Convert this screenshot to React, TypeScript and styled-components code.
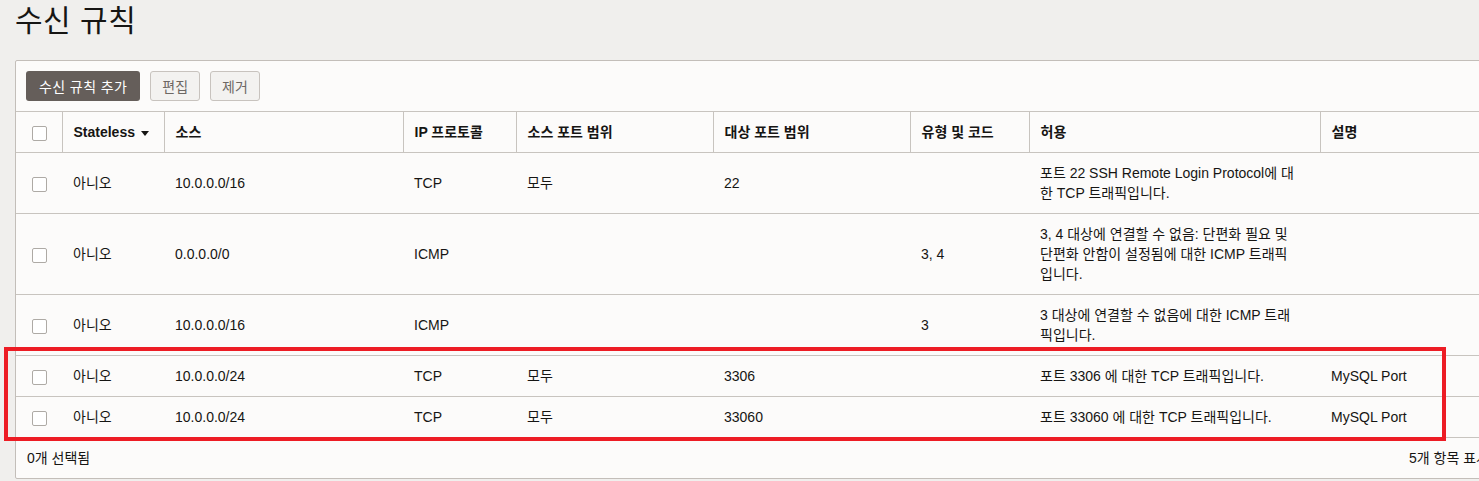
import React from "react";
import styled, { createGlobalStyle } from "styled-components";

type Rule = {
  src: string;
  proto: string;
  srcPort: string;
  dstPort: string;
  typeCode: string;
  allow: string;
  desc: string;
};

const rules: Rule[] = [
  {
    src: "10.0.0.0/16",
    proto: "TCP",
    srcPort: "모두",
    dstPort: "22",
    typeCode: "",
    allow: "포트 22 SSH Remote Login Protocol에 대한 TCP 트래픽입니다.",
    desc: "",
  },
  {
    src: "0.0.0.0/0",
    proto: "ICMP",
    srcPort: "",
    dstPort: "",
    typeCode: "3, 4",
    allow:
      "3, 4 대상에 연결할 수 없음: 단편화 필요 및 단편화 안함이 설정됨에 대한 ICMP 트래픽입니다.",
    desc: "",
  },
  {
    src: "10.0.0.0/16",
    proto: "ICMP",
    srcPort: "",
    dstPort: "",
    typeCode: "3",
    allow: "3 대상에 연결할 수 없음에 대한 ICMP 트래픽입니다.",
    desc: "",
  },
  {
    src: "10.0.0.0/24",
    proto: "TCP",
    srcPort: "모두",
    dstPort: "3306",
    typeCode: "",
    allow: "포트 3306 에 대한 TCP 트래픽입니다.",
    desc: "MySQL Port",
  },
  {
    src: "10.0.0.0/24",
    proto: "TCP",
    srcPort: "모두",
    dstPort: "33060",
    typeCode: "",
    allow: "포트 33060 에 대한 TCP 트래픽입니다.",
    desc: "MySQL Port",
  },
];

const colWidths = [46, 102, 239, 113, 197, 197, 119, 291, 179];

function App() {
  return (
    <Page>
      <GlobalStyle />
      <Title>수신 규칙</Title>
      <Panel>
        <Toolbar>
          <PrimaryButton>수신 규칙 추가</PrimaryButton>
          <GhostButton>편집</GhostButton>
          <GhostButton>제거</GhostButton>
        </Toolbar>
        <Table>
          <colgroup>
            {colWidths.map((w, i) => (
              <col key={i} style={{ width: w }} />
            ))}
          </colgroup>
          <thead>
            <tr>
              <HeadCell $center>
                <Check />
              </HeadCell>
              <HeadCell>
                Stateless <SortArrow />
              </HeadCell>
              <HeadCell>소스</HeadCell>
              <HeadCell>IP 프로토콜</HeadCell>
              <HeadCell>소스 포트 범위</HeadCell>
              <HeadCell>대상 포트 범위</HeadCell>
              <HeadCell>유형 및 코드</HeadCell>
              <HeadCell>허용</HeadCell>
              <HeadCell $last>설명</HeadCell>
            </tr>
          </thead>
          <tbody>
            {rules.map((r, i) => (
              <tr key={i}>
                <Cell $center>
                  <Check />
                </Cell>
                <Cell>아니오</Cell>
                <Cell>{r.src}</Cell>
                <Cell>{r.proto}</Cell>
                <Cell>{r.srcPort}</Cell>
                <Cell>{r.dstPort}</Cell>
                <Cell>{r.typeCode}</Cell>
                <Cell>
                  <AllowText>{r.allow}</AllowText>
                </Cell>
                <Cell>{r.desc}</Cell>
              </tr>
            ))}
          </tbody>
        </Table>
        <Footer>
          <span>0개 선택됨</span>
          <span>5개 항목 표시</span>
        </Footer>
      </Panel>
      <Highlight />
    </Page>
  );
}

export default App;

const GlobalStyle = createGlobalStyle`
  body {
    margin: 0;
    background: #f0efed;
    overflow: hidden;
    font-family: "Liberation Sans", "Noto Sans CJK KR", Arial, sans-serif;
    color: #161513;
  }
`;

const Page = styled.div`
  position: relative;
  width: 1479px;
  height: 481px;
  padding: 0 0 0 15px;
  box-sizing: border-box;
  overflow: hidden;
`;

const Title = styled.h1`
  margin: 0;
  height: 60px;
  font-size: 30px;
  font-weight: 400;
  line-height: 42px;
  letter-spacing: 0.5px;
`;

const Panel = styled.div`
  width: 1485px;
  background: #fcfbfa;
  border: 1px solid #c3beb9;
  border-radius: 2px;
  box-sizing: border-box;
`;

const Toolbar = styled.div`
  display: flex;
  gap: 10px;
  padding: 10px;
`;

const PrimaryButton = styled.button`
  height: 30px;
  padding: 0 13px;
  border: none;
  border-radius: 3px;
  background: #655e5a;
  color: #ffffff;
  font-family: inherit;
  font-size: 14px;
  letter-spacing: 0.4px;
`;

const GhostButton = styled.button`
  height: 30px;
  padding: 0 11px;
  border: 1px solid #c8c3be;
  border-radius: 3px;
  background: #f3f2f0;
  color: #6d6864;
  font-family: inherit;
  font-size: 14px;
`;

const Table = styled.table`
  width: 100%;
  table-layout: fixed;
  border-collapse: collapse;
  font-size: 14px;
  line-height: 20px;
`;

const HeadCell = styled.th<{ $center?: boolean; $last?: boolean }>`
  padding: 10px 10px 10px 11px;
  text-align: ${(p) => (p.$center ? "center" : "left")};
  font-weight: 700;
  border-top: 1px solid #c8c4bf;
  border-bottom: 1px solid #c8c4bf;
  border-right: ${(p) => (p.$last ? "none" : "1px solid #c8c4bf")};
  white-space: nowrap;
  vertical-align: middle;
`;

const Cell = styled.td<{ $center?: boolean }>`
  padding: 10px 10px 10px 11px;
  text-align: ${(p) => (p.$center ? "center" : "left")};
  border-bottom: 1px solid #c8c4bf;
  vertical-align: middle;
`;

const AllowText = styled.div`
  max-width: 259px;
`;

const Check = styled.span`
  display: inline-block;
  width: 15px;
  height: 15px;
  border: 1px solid #aeaaa5;
  border-radius: 2px;
  background: #ffffff;
  box-sizing: border-box;
  vertical-align: middle;
`;

const SortArrow = styled.span`
  display: inline-block;
  margin-left: 2px;
  width: 0;
  height: 0;
  border-left: 4.5px solid transparent;
  border-right: 4.5px solid transparent;
  border-top: 5px solid #161513;
  vertical-align: middle;
`;

const Footer = styled.div`
  display: flex;
  justify-content: space-between;
  padding: 10px 10px 10px 11px;
  font-size: 14px;
  line-height: 20px;
`;

const Highlight = styled.div`
  position: absolute;
  left: 4px;
  top: 347px;
  width: 1442px;
  height: 94px;
  border: 4px solid #ed1c24;
  box-sizing: border-box;
  pointer-events: none;
`;
